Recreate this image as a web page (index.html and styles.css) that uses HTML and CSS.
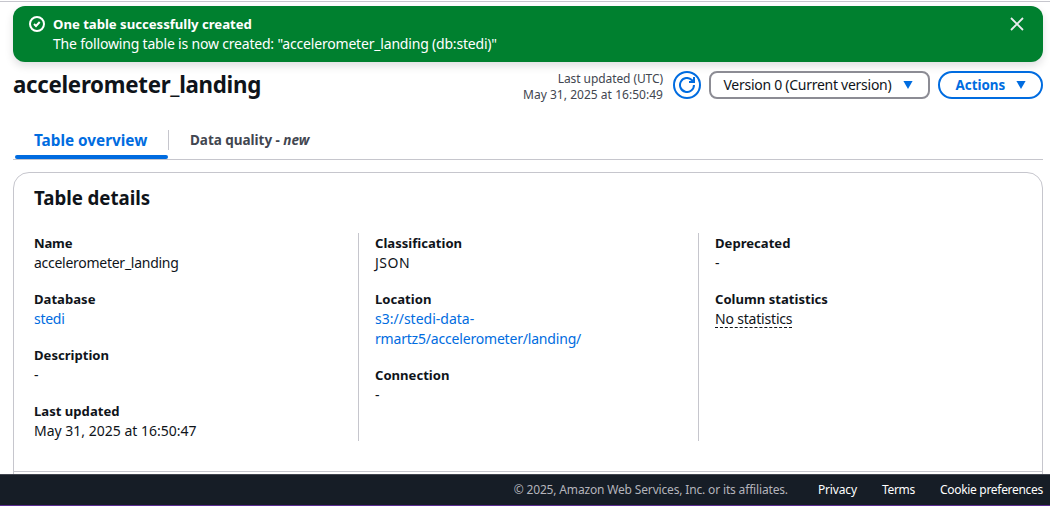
FILE: index.html
```
<!DOCTYPE html>
<html lang="en">
<head>
<meta charset="utf-8">
<title>accelerometer_landing</title>
<link rel="stylesheet" href="styles.css">
</head>
<body>
<div class="page">
  <main class="content">
    <section class="flash">
      <svg class="flash-icon" viewBox="0 0 16 16" width="16" height="16" fill="none" stroke="#fff" stroke-width="2"><circle cx="8" cy="8" r="7"/><path d="M5 8l2 2 3.7-4"/></svg>
      <div class="flash-body">
        <div class="flash-title">One table successfully created</div>
        <div class="flash-text">The following table is now created: "accelerometer_landing (db:stedi)"</div>
      </div>
      <svg class="flash-close" viewBox="0 0 16 16" width="16" height="16" fill="none" stroke="#ebebf0" stroke-width="1.8"><path d="M2 2l12 12M14 2L2 14"/></svg>
    </section>

    <header class="header">
      <h1 class="title">accelerometer_landing</h1>
      <div class="updated"><div class="updated-label">Last updated (UTC)</div><div class="updated-time">May 31, 2025 at 16:50:49</div></div>
      <button class="refresh" aria-label="Refresh"><svg viewBox="0 0 16 16" width="16" height="16" fill="none" stroke="currentColor" stroke-width="2"><path d="M15 8a7 7 0 1 1-2.2-5.1L15 5"/><path d="M15 0v5h-5"/></svg></button>
      <button class="select"><span>Version 0 (Current version)</span><svg class="caret" viewBox="0 0 12 10" width="12" height="10"><path d="M1.4 1h9.2L6 9z"/></svg></button>
      <button class="actions"><span>Actions</span><svg class="caret" viewBox="0 0 12 10" width="12" height="10"><path d="M1.4 1h9.2L6 9z"/></svg></button>
    </header>

    <nav class="tabs">
      <a class="tab tab-active">Table overview</a>
      <a class="tab">Data quality - <i>new</i></a>
    </nav>

    <section class="card">
      <h2 class="card-title">Table details</h2>
      <div class="columns">
        <dl class="column">
          <div><dt class="snug">Name</dt><dd class="tight">accelerometer_landing</dd></div>
          <div><dt>Database</dt><dd class="tight"><a class="link">stedi</a></dd></div>
          <div><dt>Description</dt><dd>-</dd></div>
          <div><dt>Last updated</dt><dd>May 31, 2025 at 16:50:47</dd></div>
        </dl>
        <dl class="column">
          <div><dt>Classification</dt><dd class="wide">JSON</dd></div>
          <div><dt>Location</dt><dd><a class="link">s3://stedi-data-<br><span class="path">rmartz5/accelerometer/landing/</span></a></dd></div>
          <div><dt>Connection</dt><dd>-</dd></div>
        </dl>
        <dl class="column">
          <div><dt>Deprecated</dt><dd>-</dd></div>
          <div><dt>Column statistics</dt><dd class="path"><span class="hint">No statistics</span></dd></div>
        </dl>
      </div>
      <div class="card-footer"></div>
    </section>
  </main>
  <footer class="footer">
    <span class="copyright">© 2025, Amazon Web Services, Inc. or its affiliates.</span>
    <a class="privacy">Privacy</a>
    <a>Terms</a>
    <a>Cookie preferences</a>
  </footer>
</div>
</body>
</html>
```
FILE: styles.css
```
* { box-sizing: border-box; }
body { margin: 0; background: #fff; color: #0f141a; font: 14px/20px "Noto Sans", "Open Sans", sans-serif; }
h1, h2, dl, dd { margin: 0; }
button { font: inherit; background: #fff; }
svg { display: block; flex: none; }

.page { height: 506px; display: flex; flex-direction: column; overflow: hidden; padding-top: 1px; }
.content { flex: 1; min-height: 0; overflow: hidden; border-top: 1px solid #c6c6cd; padding: 4px 7px 0 13px; }

.flash { display: flex; height: 56px; padding: 8px 18px 8px 16px; border-radius: 12px; background: #00802f; color: #fff; box-shadow: 0 4px 8px rgba(0, 7, 22, .13); }
.flash-icon { margin-top: 2px; }
.flash-body { flex: 1; margin-left: 8px; }
.flash-title { font-size: 13.2px; font-weight: 700; letter-spacing: -.04px; }
.flash-text { letter-spacing: -.19px; }
.flash-close { margin-top: 2px; }

.header { display: flex; align-items: center; height: 28px; margin-top: 9px; }
.title { flex: 1; font-size: 22.3px; line-height: 28px; font-weight: 700; letter-spacing: -.29px; }
.updated { font-size: 12px; line-height: 16px; color: #424650; text-align: right; margin: 4px 10px 0 0; }
.updated-label { letter-spacing: -.08px; }
.updated-time { letter-spacing: .03px; }
.refresh { width: 28px; height: 28px; margin-right: 8px; padding: 4px; border: 2px solid #006ce0; border-radius: 50%; color: #006ce0; }
.select { display: flex; align-items: center; justify-content: space-between; width: 221px; height: 28px; margin-right: 8px; padding: 0 14px 0 12.5px; border: 2px solid #8c8c94; border-radius: 8px; color: #0f141a; letter-spacing: -.27px; }
.actions { display: flex; align-items: center; justify-content: space-between; width: 105px; height: 28px; padding: 0 14px 0 15.5px; border: 2px solid #006ce0; border-radius: 14px; color: #006ce0; font-size: 13.4px; font-weight: 700; }
.caret { fill: #006ce0; }

.tabs { display: flex; height: 39px; margin-top: 22px; border-bottom: 1px solid #c6c6cd; }
.tab { height: 20px; margin-top: 9px; padding: 0 21px; color: #424650; font-size: 13.5px; font-weight: 700; letter-spacing: -.03px; }
.tab-active { position: relative; width: 156px; border-right: 1px solid #c6c6cd; color: #006ce0; font-size: 15.3px; letter-spacing: 0; padding-right: 0; }
.tab-active::after { content: ""; position: absolute; left: 2px; right: 0; bottom: -9px; height: 4px; border-radius: 2px; background: #006ce0; }

.card { height: 360px; margin-top: 12px; border: 1px solid #c6c6cd; border-radius: 16px; }
.card-title { padding: 13px 20px 0; font-size: 18.7px; line-height: 24px; font-weight: 700; letter-spacing: -.05px; }
.columns { display: grid; grid-template-columns: 324px 340px 1fr; height: 208px; margin: 23px 20px 0; }
.column { display: flex; flex-direction: column; gap: 16px; }
.column + .column { border-left: 1px solid #c6c6cd; padding-left: 16px; }
dt { font-size: 13.1px; font-weight: 700; }
.snug { letter-spacing: -.2px; }
.tight { letter-spacing: -.27px; }
.wide { letter-spacing: .5px; }
.path { letter-spacing: -.19px; }
.link { color: #006ce0; }
.hint { display: inline-block; height: 19px; border-bottom: 1px dashed #0f141a; }
.card-footer { margin-top: 30px; border-top: 1px solid #c6c6cd; }

.footer { display: flex; justify-content: flex-end; gap: 25px; height: 32px; padding-right: 7px; background: #161d26; border-top: 1px solid #424650; border-bottom: 1px solid #5c2d91; color: #fff; font-size: 12px; line-height: 30px; letter-spacing: -.3px; }
.copyright { color: #b4b4bb; letter-spacing: -.16px; margin-right: 5px; }
.privacy { letter-spacing: -.15px; }
```
